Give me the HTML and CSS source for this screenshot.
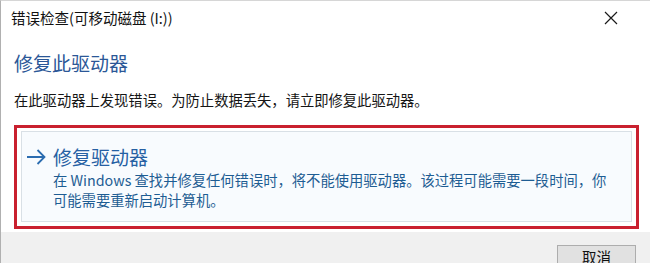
FILE: index.html
```html
<!DOCTYPE html>
<html lang="zh-CN">
<head>
    <meta charset="UTF-8">
    <title>错误检查(可移动磁盘 (I:))</title>
    <link rel="stylesheet" href="styles.css">
</head>
<body>
    <div class="dialog">
        <div class="titlebar">
            <span class="title">错误检查(可移动磁盘 (I:))</span>
            <svg class="close" width="14" height="14" viewBox="0 0 14 14">
                <path d="M1 1 L13 13 M13 1 L1 13" stroke="#1a1a1a" stroke-width="1.2" fill="none"/>
            </svg>
        </div>

        <div class="content">
            <h1 class="instruction">修复此驱动器</h1>
            <p class="message">在此驱动器上发现错误。为防止数据丢失，请立即修复此驱动器。</p>

            <div class="highlight">
                <div class="cmd-link">
                    <svg class="arrow" width="20" height="16" viewBox="0 0 20 16">
                        <path d="M1 8 H18.5 M11.5 1 L18.5 8 L11.5 15" stroke="#2b6cb0" stroke-width="1.8" fill="none"/>
                    </svg>
                    <div class="cmd-text">
                        <div class="cmd-title">修复驱动器</div>
                        <div class="cmd-desc">在 Windows 查找并修复任何错误时，将不能使用驱动器。该过程可能需要一段时间，你<br>可能需要重新启动计算机。</div>
                    </div>
                </div>
            </div>
        </div>

        <div class="footer">
            <button class="btn">取消</button>
        </div>
    </div>
</body>
</html>
```

FILE: styles.css
```css
body {
    margin: 0;
    width: 650px;
    height: 263px;
    overflow: hidden;
    background-color: white;
    font-family: "Noto Sans CJK SC", "Noto Sans", sans-serif;
}
.dialog {
    height: 263px;
    border-left: 1px solid #b0b0b0;
    border-top: 1px solid #d6d6d6;
    box-sizing: border-box;
    overflow: hidden;
}
.titlebar {
    height: 33px;
    display: flex;
    align-items: center;
    justify-content: space-between;
    padding: 0 32px 0 10px;
}
.title {
    font-size: 14.5px;
    color: #111;
}
.content {
    padding: 0 11px 0 13px;
}
.instruction {
    margin: 16px 0 0 0;
    font-weight: normal;
    font-size: 19px;
    line-height: 26px;
    color: #2b5797;
}
.message {
    margin: 14px 0 0 0;
    font-size: 14.3px;
    line-height: 20px;
    color: #151515;
}
.highlight {
    margin-top: 15px;
    border: 3px solid #c9202f;
    padding: 3px 4px 4px 4px;
}
.cmd-link {
    display: flex;
    align-items: flex-start;
    gap: 7px;
    padding: 12px 6px 11px 4px;
    background-color: #f8fbfe;
    border: 1px solid #d9e0e6;
}
.arrow {
    margin-top: 5px;
}
.cmd-title {
    font-size: 19px;
    line-height: 26px;
    color: #2660a3;
}
.cmd-desc {
    font-size: 14.3px;
    line-height: 20px;
    color: #1e5d93;
    white-space: nowrap;
}
.footer {
    height: 40px;
    margin-top: 3px;
    background-color: #f0f0f0;
    display: flex;
    justify-content: flex-end;
    align-items: flex-start;
    padding: 13px 14px 0 0;
}
.btn {
    width: 79px;
    height: 24px;
    border: 1px solid #adadad;
    background-color: #e1e1e1;
    font-family: "Noto Sans CJK SC", sans-serif;
    font-size: 14.5px;
    color: #111;
    padding: 0;
    line-height: 22px;
}
```
